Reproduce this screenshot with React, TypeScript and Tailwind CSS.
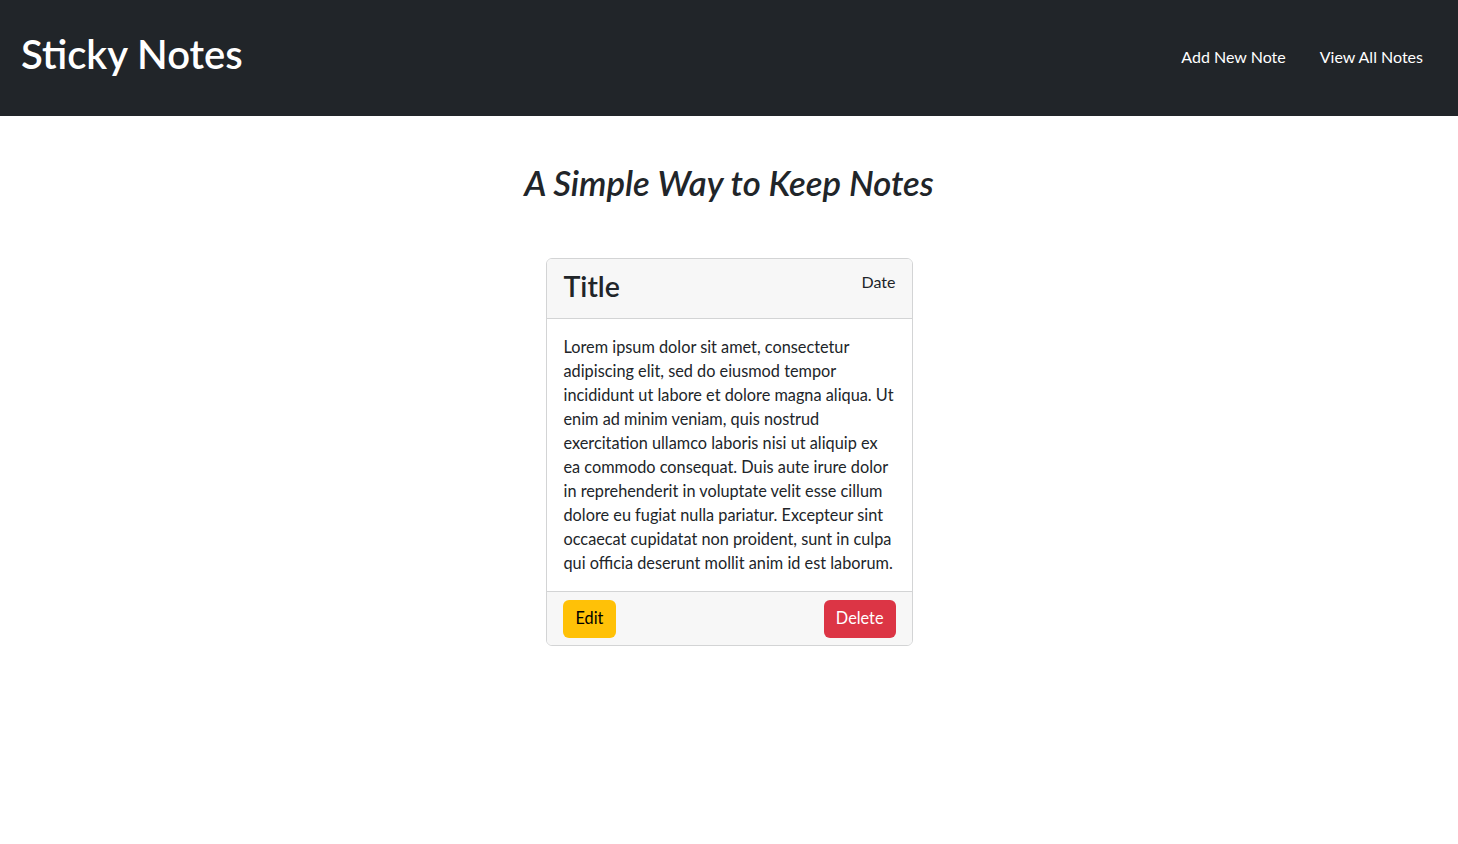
const lines = [
  "Lorem ipsum dolor sit amet, consectetur",
  "adipiscing elit, sed do eiusmod tempor",
  "incididunt ut labore et dolore magna aliqua. Ut",
  "enim ad minim veniam, quis nostrud",
  "exercitation ullamco laboris nisi ut aliquip ex",
  "ea commodo consequat. Duis aute irure dolor",
  "in reprehenderit in voluptate velit esse cillum",
  "dolore eu fugiat nulla pariatur. Excepteur sint",
  "occaecat cupidatat non proident, sunt in culpa",
  "qui officia deserunt mollit anim id est laborum.",
];

export default function App() {
  return (
    <div className="min-h-screen bg-white text-[#212529] font-['Lato',_'Open_Sans',_sans-serif]">
      <nav className="h-[116px] bg-[#212529] flex items-center justify-between pl-[21px] pr-[35px]">
        <a className="text-white text-[40px] font-semibold leading-none pb-[8px]">Sticky Notes</a>
        <div className="flex items-center gap-[34px] text-[16px] text-white pb-[2px]">
          <a>Add New Note</a>
          <a>View All Notes</a>
        </div>
      </nav>
      <main className="flex flex-col items-center">
        <h2 className="mt-[46px] text-[34.7px] leading-[42px] italic font-semibold">A Simple Way to Keep Notes</h2>
        <div className="mt-[54px] w-[367px] border border-[#d3d4d5] rounded-[6px] overflow-hidden">
          <div className="h-[60px] bg-[#f7f7f7] border-b border-[#d3d4d5] flex justify-between items-start pl-[17px] pr-[16px]">
            <h3 className="text-[28.5px] font-semibold leading-[36px] mt-[9px]">Title</h3>
            <span className="text-[16px] leading-[24px] mt-[11px]">Date</span>
          </div>
          <div className="pl-[17px] pr-[15px] py-[16px] text-[16.3px] leading-[24px]">
            {lines.map((l) => (
              <div key={l} className="whitespace-nowrap">{l}</div>
            ))}
          </div>
          <div className="h-[54px] bg-[#f7f7f7] border-t border-[#d3d4d5] flex items-center justify-between px-[16px]">
            <button className="h-[38px] px-[13px] rounded-[6px] bg-[#ffc107] text-black text-[16.3px]">Edit</button>
            <button className="h-[38px] px-[12px] rounded-[6px] bg-[#dc3545] text-white text-[16.3px]">Delete</button>
          </div>
        </div>
      </main>
    </div>
  );
}
